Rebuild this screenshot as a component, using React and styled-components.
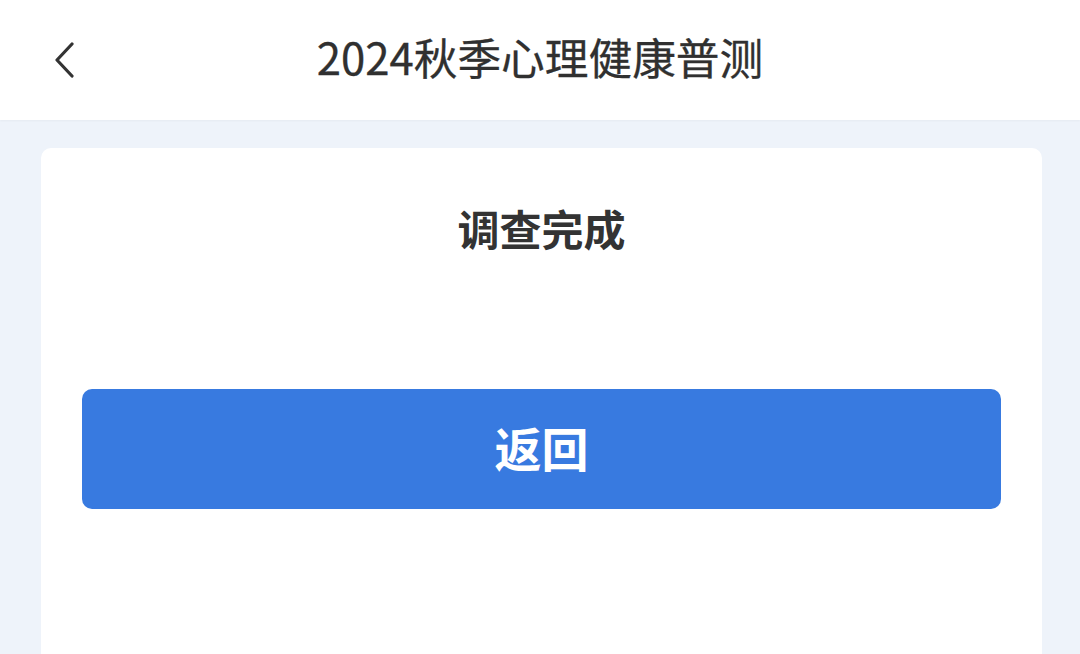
import React from "react";
import styled, { createGlobalStyle } from "styled-components";

const Global = createGlobalStyle`
  html, body { margin: 0; padding: 0; background: #eef3fa; }
  body { font-family: "Noto Sans CJK SC", "Noto Sans", sans-serif; }
`;

const Page = styled.div`
  width: 1080px;
  height: 654px;
  overflow: hidden;
  background: #eef3fa;
  display: flex;
  flex-direction: column;
`;

const Header = styled.header`
  height: 120px;
  flex: none;
  background: #ffffff;
  display: grid;
  grid-template-columns: 120px 1fr 120px;
  align-items: center;
  box-shadow: 0 1px 2px rgba(0, 0, 0, 0.04);
`;

const BackButton = styled.button`
  border: none;
  background: none;
  padding: 0 0 0 52px;
  height: 120px;
  display: flex;
  align-items: center;
  cursor: pointer;
  color: #333333;
`;

const Title = styled.h1`
  margin: 0;
  text-align: center;
  font-size: 43.7px;
  font-weight: 400;
  color: #303030;
  line-height: 1;
  padding-bottom: 6px;
  -webkit-text-stroke: 0.3px #303030;
`;

const Body = styled.main`
  flex: 1;
  padding: 28px 38px 0 41px;
  display: flex;
`;

const Card = styled.section`
  flex: 1;
  background: #ffffff;
  border-radius: 10px 10px 0 0;
  padding: 50px 41px 0;
  display: flex;
  flex-direction: column;
  align-items: stretch;
`;

const CardTitle = styled.h2`
  margin: 0;
  text-align: center;
  font-size: 42px;
  line-height: 60px;
  font-weight: 700;
  color: #333333;
`;

const PrimaryButton = styled.button`
  margin-top: 131px;
  height: 120px;
  border: none;
  border-radius: 10px;
  background: #387ae0;
  color: #ffffff;
  font-family: inherit;
  font-size: 47px;
  font-weight: 700;
  padding-bottom: 6px;
  cursor: pointer;
`;

function ChevronLeft() {
  return (
    <svg width="24" height="36" viewBox="0 0 24 36" fill="none">
      <path d="M20 2 L5 18 L20 34" stroke="currentColor" strokeWidth="3.2" strokeLinecap="round" strokeLinejoin="round" />
    </svg>
  );
}

export default function App() {
  return (
    <Page>
      <Global />
      <Header>
        <BackButton aria-label="返回">
          <ChevronLeft />
        </BackButton>
        <Title>2024秋季心理健康普测</Title>
        <div />
      </Header>
      <Body>
        <Card>
          <CardTitle>调查完成</CardTitle>
          <PrimaryButton>返回</PrimaryButton>
        </Card>
      </Body>
    </Page>
  );
}
